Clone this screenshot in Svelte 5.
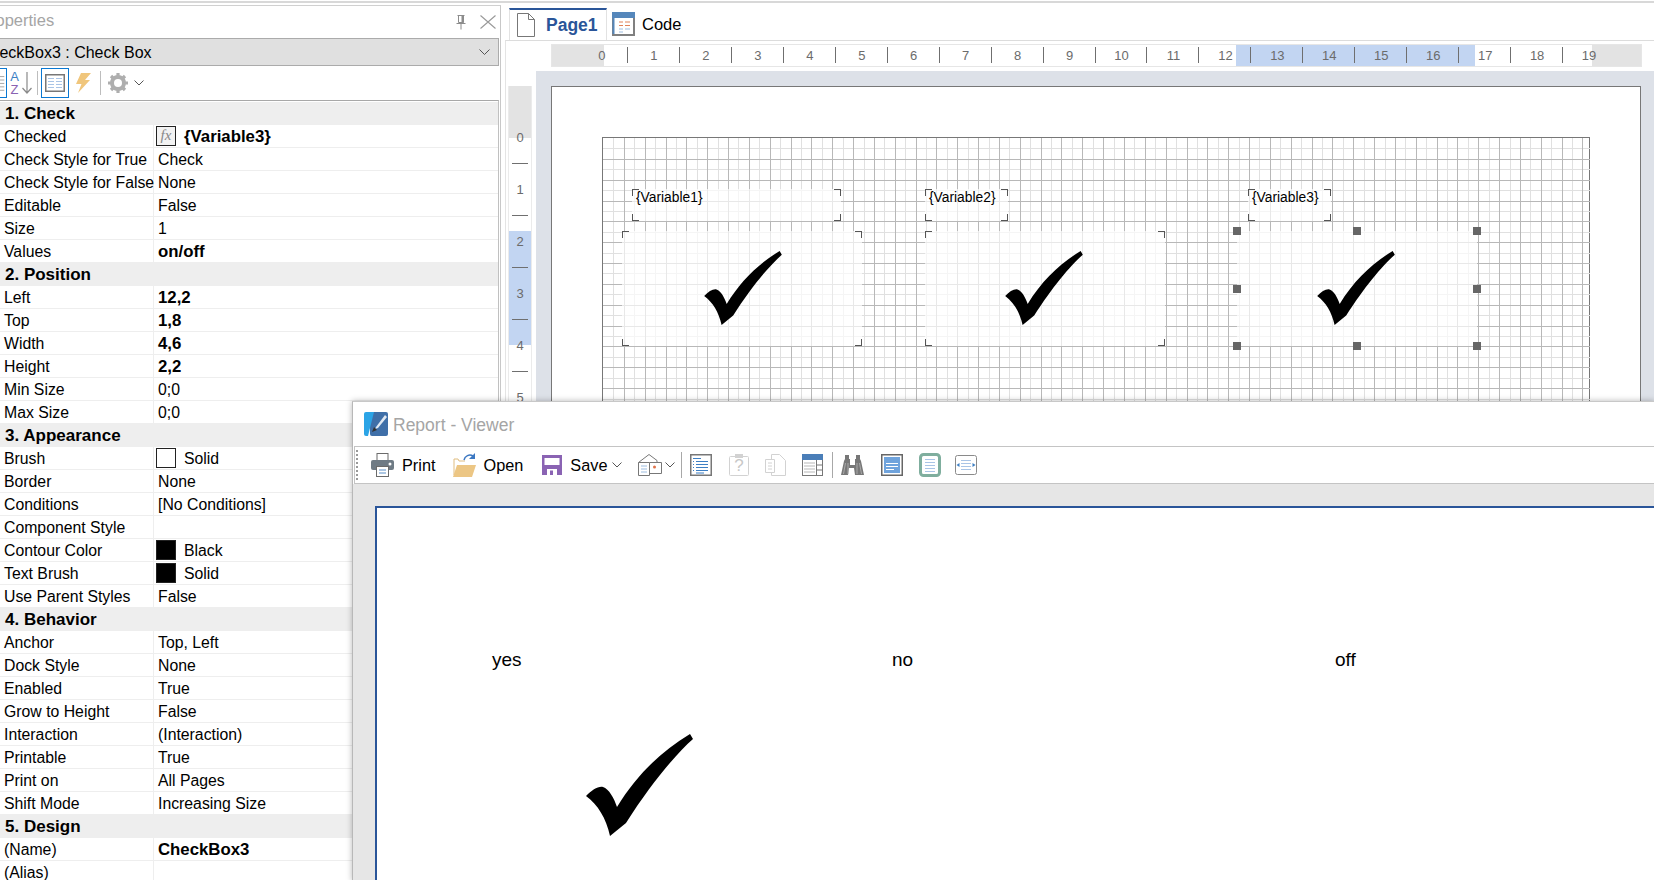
<script>
  const sections = [
    { title: '1. Check', rows: [
      { label: 'Checked', value: '{Variable3}', bold: true, fx: true },
      { label: 'Check Style for True', value: 'Check' },
      { label: 'Check Style for False', value: 'None' },
      { label: 'Editable', value: 'False' },
      { label: 'Size', value: '1' },
      { label: 'Values', value: 'on/off', bold: true }
    ]},
    { title: '2. Position', rows: [
      { label: 'Left', value: '12,2', bold: true },
      { label: 'Top', value: '1,8', bold: true },
      { label: 'Width', value: '4,6', bold: true },
      { label: 'Height', value: '2,2', bold: true },
      { label: 'Min Size', value: '0;0' },
      { label: 'Max Size', value: '0;0' }
    ]},
    { title: '3. Appearance', rows: [
      { label: 'Brush', value: 'Solid', swatch: 'white' },
      { label: 'Border', value: 'None' },
      { label: 'Conditions', value: '[No Conditions]' },
      { label: 'Component Style', value: '' },
      { label: 'Contour Color', value: 'Black', swatch: 'black' },
      { label: 'Text Brush', value: 'Solid', swatch: 'black' },
      { label: 'Use Parent Styles', value: 'False' }
    ]},
    { title: '4. Behavior', rows: [
      { label: 'Anchor', value: 'Top, Left' },
      { label: 'Dock Style', value: 'None' },
      { label: 'Enabled', value: 'True' },
      { label: 'Grow to Height', value: 'False' },
      { label: 'Interaction', value: '(Interaction)' },
      { label: 'Printable', value: 'True' },
      { label: 'Print on', value: 'All Pages' },
      { label: 'Shift Mode', value: 'Increasing Size' }
    ]},
    { title: '5. Design', rows: [
      { label: '(Name)', value: 'CheckBox3', bold: true },
      { label: '(Alias)', value: '' }
    ]}
  ];

  const rulerNums = Array.from({ length: 20 }, (_, i) => i);
  const vRulerNums = [0, 1, 2, 3, 4, 5];

  // report grid, 0.2 and 0.4 cm lines
  const step = 10.42;
  const gridW = 987;
  const gridH = 300;
  const xs = Array.from({ length: Math.ceil(gridW / step) - 1 }, (_, i) => i + 1);
  const ys = Array.from({ length: Math.ceil(gridH / step) - 1 }, (_, i) => i + 1);

  const textBoxes = [
    { text: '{Variable1}', left: 29, width: 209 },
    { text: '{Variable2}', left: 322, width: 83 },
    { text: '{Variable3}', left: 645, width: 83 }
  ];
  const checkBoxes = [
    { left: 19, width: 240, mark: 101 },
    { left: 322, width: 240, mark: 402 },
    { left: 634, width: 240, mark: 714, selected: true }
  ];
  const checkPath = 'M130 24 L133 29 C115 45 90 75 66 113 L50 126 C46 108 38 95 26 86 C32 80 38 76 43 77 C49 79 54 88 57 97 C76 66 100 42 130 24 Z';
</script>

<div class="app">
  <div class="top-rule"></div>
  <div class="main">
    <aside class="panel">
      <div class="panel-title">
        <span class="panel-name">Properties</span>
        <svg class="pin" width="14" height="15" viewBox="0 0 14 15"><path d="M3.500 .5h7M4.500 .5v7h5v-7M2.500 8.500h9M7 8.500v6" fill="none" stroke="#8c8c8c"/><rect x="7.500" y="1" width="2" height="7" fill="#8c8c8c"/></svg>
        <svg class="close" width="16" height="14" viewBox="0 0 16 14"><path d="M.5 .5l15 13M15.500 .5l-15 13" fill="none" stroke="#999" stroke-width="1.100"/></svg>
      </div>
      <div class="combo">
        <span class="combo-text">CheckBox3 : Check Box</span>
        <svg width="11" height="6" viewBox="0 0 11 6"><path d="M.5 .5l5 5 5-5" fill="none" stroke="#555"/></svg>
      </div>
      <div class="prop-tools">
        <span class="tool-on first">
          <svg width="7" height="22" viewBox="0 0 7 22"><path d="M0 3.500h5M0 7.500h5M0 11.500h5M0 15.500h5M0 19.500h5" stroke="#9a9a9a" fill="none"/></svg>
        </span>
        <span class="az">
          <span class="az-a">A</span>
          <span class="az-z">Z</span>
        </span>
        <svg class="az-arrow" width="10" height="22" viewBox="0 0 10 22"><path d="M5 0v21M.5 16l4.500 5 4.500-5" fill="none" stroke="#8a8a8a" stroke-width="1.200"/></svg>
        <span class="tool-sep"></span>
        <span class="tool-on">
          <svg width="20" height="18" viewBox="0 0 20 18"><rect x=".75" y=".75" width="18.500" height="16.500" fill="#fff" stroke="#777" stroke-width="1.500"/><path d="M3 4.500h6M11 4.500h6M3 7.500h6M11 7.500h6M3 10.500h6M11 10.500h6M3 13.500h6M11 13.500h6" stroke="#a9c4e6"/></svg>
        </span>
        <svg class="bolt" width="15" height="20" viewBox="0 0 15 20"><path d="M5 0h10L9 7h5L2 20l3.500-9H0z" fill="#f0c67c"/></svg>
        <span class="tool-sep second"></span>
        <svg class="gear" width="20" height="20" viewBox="0 0 20 20"><circle cx="10" cy="10" r="6" fill="none" stroke="#aeaeae" stroke-width="4"/><path d="M10 0v20M0 10h20M3 3l14 14M17 3L3 17" stroke="#aeaeae" stroke-width="3.200"/><circle cx="10" cy="10" r="4" fill="#fff"/></svg>
        <svg class="gear-chev" width="10" height="6" viewBox="0 0 10 6"><path d="M.5 .5l4.500 4.500 4.500-4.500" fill="none" stroke="#555"/></svg>
      </div>
      <div class="grid">
        {#each sections as section}
          <div class="cat">{section.title}</div>
          {#each section.rows as row}
            <div class="row">
              <div class="label">{row.label}</div>
              <div class="value" class:bold={row.bold}>
                {#if row.fx}
                  <span class="swatch fx">fx</span>
                {:else if row.swatch}
                  <span class="swatch {row.swatch}"></span>
                {/if}
                {row.value}
              </div>
            </div>
          {/each}
        {/each}
      </div>
    </aside>

    <section class="designer">
      <div class="tabs">
        <div class="tab active">
          <svg width="18" height="24" viewBox="0 0 18 24"><path d="M.5 .5h11l6 6v17H.5zM11.500 .5v6h6" fill="#fff" stroke="#777"/></svg>
          <span>Page1</span>
        </div>
        <div class="tab">
          <svg width="23" height="24" viewBox="0 0 23 24"><rect x="1" y="1" width="21" height="22" fill="#fff" stroke="#808080" stroke-width="2"/><rect width="23" height="6" fill="#5587bb"/><path d="M1.500 6v16" stroke="#5587bb" stroke-width="2"/><path d="M7 10h4M13 10h5M7 13.500h4M13 13.500h5" stroke="#e0825a"/><path d="M7 17h4M13 17h5M7 20h4" stroke="#9dbde0"/></svg>
          <span>Code</span>
        </div>
      </div>
      <div class="body">
        <div class="h-ruler">
          <div class="h-ruler-band"></div>
          {#each rulerNums as n}
            <div class="h-cell">
              <span class="h-num">{n}</span>
              {#if n < 19}<span class="h-tick"></span>{/if}
            </div>
          {/each}
        </div>
        <div class="work-row">
          <div class="v-ruler">
            <div class="v-grey"></div>
            <div class="v-band"></div>
            {#each vRulerNums as n}
              <div class="v-cell">
                <span class="v-num">{n}</span>
                <span class="v-tick"></span>
              </div>
            {/each}
          </div>
          <div class="workspace">
            <div class="page">
              <div class="canvas">
                <svg class="lines" width={gridW} height={gridH} shape-rendering="crispEdges">
                  {#each xs as i}
                    {#if i % 2}<line x1={Math.round(i * step) + 0.5} x2={Math.round(i * step) + 0.5} y1="0" y2={gridH} stroke="#e0e0e0"/>{/if}
                  {/each}
                  {#each ys as i}
                    {#if i % 2}<line y1={Math.round(i * step) + 0.5} y2={Math.round(i * step) + 0.5} x1="0" x2={gridW} stroke="#e0e0e0"/>{/if}
                  {/each}
                  {#each xs as i}
                    {#if !(i % 2)}<line x1={Math.round(i * step) + 0.5} x2={Math.round(i * step) + 0.5} y1="0" y2={gridH} stroke="#b8b8b8"/>{/if}
                  {/each}
                  {#each ys as i}
                    {#if !(i % 2)}<line y1={Math.round(i * step) + 0.5} y2={Math.round(i * step) + 0.5} x1="0" x2={gridW} stroke="#b8b8b8"/>{/if}
                  {/each}
                </svg>
                {#each textBoxes as box}
                  <div class="comp text-box" style="left:{box.left}px;width:{box.width}px">
                    <i class="tl"></i><i class="tr"></i><i class="bl"></i><i class="br"></i>
                    {box.text}
                  </div>
                {/each}
                {#each checkBoxes as box}
                  <div class="comp check-box" style="left:{box.left}px;width:{box.width}px">
                    {#if box.selected}
                      <b class="h h1"></b><b class="h h2"></b><b class="h h3"></b><b class="h h4"></b><b class="h h5"></b><b class="h h6"></b><b class="h h7"></b><b class="h h8"></b>
                    {:else}
                      <i class="tl"></i><i class="tr"></i><i class="bl"></i><i class="br"></i>
                    {/if}
                  </div>
                  <svg class="mark" style="left:{box.mark}px" width="78" height="74" viewBox="26 24 107 102"><path d={checkPath}/></svg>
                {/each}
              </div>
            </div>
          </div>
        </div>
      </div>
    </section>
  </div>

  <div class="viewer">
    <div class="viewer-title">
      <svg width="24" height="24" viewBox="0 0 24 24">
        <rect x="6" width="18" height="24" rx="2" fill="#3f6fa8"/>
        <path d="M2 0h8L4 24H2a2 2 0 0 1-2-2V2a2 2 0 0 1 2-2z" fill="#2ba4e6"/>
        <path d="M21 3L12 15l-1 2 3-1L23 5z" fill="#dfe8f2"/>
        <path d="M10 15l-2 5 5-2z" fill="#333"/>
      </svg>
      <span>Report - Viewer</span>
    </div>
    <div class="viewer-tools">
      <span class="grip"></span>
      <svg class="ic print" width="23" height="24" viewBox="0 0 23 24"><rect x="6" y=".5" width="11" height="7" fill="#fff" stroke="#6b6b6b"/><rect y="7" width="23" height="10" rx="2" fill="#6f7b85"/><circle cx="19" cy="11" r="1.500" fill="#fff"/><rect x="5.500" y="13.500" width="12" height="10" fill="#fff" stroke="#6b6b6b"/><path d="M8 17h7M8 20h7" stroke="#5b8fc7"/></svg>
      <span class="lbl print-l">Print</span>
      <svg class="ic open" width="23" height="24" viewBox="0 0 23 24"><path d="M1 22V6h4l1 2h6" fill="#fff" stroke="#e0bd80"/><path d="M0 24l4-12h19l-4 12z" fill="#ecc684"/><path d="M11 7a6 6 0 0 1 9-4" fill="none" stroke="#3c78c2" stroke-width="1.500"/><path d="M22 0v6h-6z" fill="#3c78c2"/></svg>
      <span class="lbl open-l">Open</span>
      <svg class="ic save" width="20" height="20" viewBox="0 0 20 20"><path d="M0 0h20v20H0z" fill="#8a63b3"/><rect x="2.500" y="3" width="15" height="7" fill="#fff"/><rect x="5" y="14" width="10" height="6" fill="#fff"/><rect x="8" y="15.500" width="3" height="4.500" fill="#8a63b3"/></svg>
      <span class="lbl save-l">Save</span>
      <svg class="chev save-c" width="10" height="6" viewBox="0 0 10 6"><path d="M.5 .5l4.500 4.500 4.500-4.500" fill="none" stroke="#555"/></svg>
      <svg class="ic house" width="24" height="22" viewBox="0 0 24 22"><path d="M.5 8.500L11 .5l8 6v2M.5 8.500v13h11v-13zM11.500 8.500h12v11h-12" fill="#fff" stroke="#777"/><path d="M3 12h6M3 15h6M3 18h6" stroke="#9dbde0"/><circle cx="16.500" cy="13" r="1.500" fill="#e0734a"/></svg>
      <svg class="chev house-c" width="10" height="6" viewBox="0 0 10 6"><path d="M.5 .5l4.500 4.500 4.500-4.500" fill="none" stroke="#555"/></svg>
      <span class="vsep s1"></span>
      <svg class="ic outline" width="22" height="22" viewBox="0 0 22 22"><rect x=".75" y=".75" width="20.500" height="20.500" fill="#fff" stroke="#777" stroke-width="1.500"/><path d="M3 4.500h8M6 7.500h12M6 10.500h12M6 13.500h12M6 16.500h12M6 19h8" stroke="#3d7fc4" stroke-width="1.200"/><path d="M3.500 7v1M3.500 10v1M3.500 13v1M3.500 16v1" stroke="#3d7fc4"/></svg>
      <svg class="ic clip" width="20" height="22" viewBox="0 0 20 22"><rect x=".5" y="2.500" width="19" height="19" rx="1" fill="#fff" stroke="#d2d2d2"/><rect x="6" y="0" width="8" height="4" fill="#d2d2d2"/><text x="10" y="17" text-anchor="middle" class="qm">?</text></svg>
      <svg class="ic copy" width="21" height="22" viewBox="0 0 21 22"><path d="M6.500 .5h8l6 6v15h-14z" fill="#fff" stroke="#d2d2d2"/><path d="M.5 5.500h9v13h-9z" fill="#fff" stroke="#d2d2d2"/><path d="M3 9h4M3 12h4M3 15h4" stroke="#d2d2d2"/></svg>
      <svg class="ic table" width="21" height="22" viewBox="0 0 21 22"><rect x=".5" y=".5" width="20" height="21" fill="#fff" stroke="#777"/><rect width="21" height="6" fill="#4a7eb8"/><path d="M2 9h11M2 12h11M2 15h11M2 18h11" stroke="#b8b8b8" stroke-width="1.200"/><path d="M14.500 6v15M14.500 11H21M14.500 16H21" stroke="#777"/></svg>
      <span class="vsep s2"></span>
      <svg class="ic bino" width="23" height="22" viewBox="0 0 23 22"><path d="M4 1h4v4h1v6h5V5h1V1h4v4l1 2 3 14h-9l-1-7h-5l-1 7H0L3 7l1-2z" fill="#777"/><path d="M2.500 20l2-11M7 20V9M16 20V9M20.500 20l-2-11" stroke="#b5b5b5" stroke-width=".8"/></svg>
      <svg class="ic pg-blue" width="22" height="22" viewBox="0 0 22 22"><rect x=".75" y=".75" width="20.500" height="20.500" fill="#fff" stroke="#666" stroke-width="1.500"/><rect x="3" y="3" width="16" height="16" fill="#6fa3dc"/><path d="M5 9.500h12M5 12.500h12M5 15.500h8" stroke="#fff"/></svg>
      <svg class="ic pg-green" width="22" height="24" viewBox="0 0 22 24"><rect x="1.500" y="1.500" width="19" height="21" rx="3" fill="#fff" stroke="#7fae9e" stroke-width="3"/><path d="M6 6.500h10M6 9.500h10M6 12.500h10M6 15.500h10M6 18.500h10" stroke="#a9c4e6"/></svg>
      <svg class="ic pg-wide" width="22" height="20" viewBox="0 0 22 20"><rect x=".5" y=".5" width="21" height="19" rx="2" fill="#fff" stroke="#8a8a8a"/><path d="M6 5.500h10M6 8.500h10M6 11.500h10M6 14.500h10" stroke="#a9c4e6"/><path d="M1.500 10l3-2v4zM20.500 10l-3-2v4z" fill="#3d7fc4"/></svg>
    </div>
    <div class="viewer-body">
      <div class="paper">
        <span class="report-text t1">yes</span>
        <span class="report-text t2">no</span>
        <span class="report-text t3">off</span>
        <svg class="big-mark" width="107" height="102" viewBox="26 24 107 102"><path d={checkPath}/></svg>
      </div>
    </div>
  </div>
</div>

<style>
  :global(body) {
    background: #fff;
    font-family: "Liberation Sans", Arial, sans-serif;
  }
  .app {
    position: relative;
    width: 1654px;
    height: 880px;
    overflow: hidden;
    background: #fff;
    color: #000;
    font-size: 15.800px;
  }
  .top-rule {
    height: 2px;
    margin-top: 1px;
    background: #d8d8d8;
  }
  .main {
    display: flex;
    height: 877px;
  }

  /* properties panel */
  .panel {
    width: 501px;
    flex: none;
    box-sizing: border-box;
    margin-top: 2px;
    border-top: 1px solid #d0d0d0;
    border-right: 1px solid #c8c8c8;
    overflow: hidden;
  }
  .panel-title {
    display: flex;
    align-items: center;
    height: 32px;
  }
  .panel-name {
    margin: -4px 0 0 -21px;
    color: #a5a5a5;
    font-size: 16.500px;
    flex: 1;
  }
  .pin {
    margin-right: 12px;
  }
  .close {
    margin-right: 4px;
  }
  .combo {
    display: flex;
    align-items: center;
    justify-content: space-between;
    box-sizing: border-box;
    height: 28px;
    padding-right: 8px;
    background: #e0e0e0;
    border: 1px solid #ababab;
    border-left: 0;
    margin-right: 1px;
  }
  .combo-text {
    margin: 2px 0 0 -21px;
    font-size: 16px;
  }
  .prop-tools {
    display: flex;
    align-items: center;
    height: 34px;
    box-sizing: border-box;
  }
  .tool-on {
    display: flex;
    align-items: center;
    justify-content: center;
    box-sizing: border-box;
    width: 28px;
    height: 30px;
    border: 1px solid #0a78d2;
  }
  .tool-on.first {
    width: 7px;
    border-left: 0;
    margin-right: 3px;
    justify-content: flex-start;
  }
  .az {
    display: flex;
    flex-direction: column;
    width: 9px;
    font-size: 13px;
    line-height: 13px;
    align-items: center;
  }
  .az-a {
    color: #3d7fc4;
  }
  .az-z {
    color: #8a63b3;
  }
  .az-arrow {
    margin-left: 3px;
  }
  .tool-sep {
    width: 1px;
    height: 24px;
    background: #bdbdbd;
    margin: 0 3px 0 5px;
  }
  .tool-sep.second {
    margin: 0 7px 0 9px;
  }
  .bolt {
    margin-left: 7px;
  }
  .gear-chev {
    margin-left: 6px;
  }
  .grid {
    border-top: 1px solid #a8a8a8;
    border-right: 1px solid #c0c0c0;
    padding-top: 1px;
    margin-right: 1px;
  }
  .cat {
    height: 23px;
    line-height: 24px;
    padding-left: 5px;
    background: #eeeeee;
    font-weight: 700;
    font-size: 17px;
  }
  .row {
    display: flex;
    height: 23px;
    box-sizing: border-box;
    line-height: 24px;
    border-bottom: 1px solid #eeeeee;
    white-space: nowrap;
  }
  .label {
    flex: none;
    width: 154px;
    box-sizing: border-box;
    padding-left: 4px;
    border-right: 1px solid #eeeeee;
  }
  .value {
    display: flex;
    align-items: center;
    gap: 8px;
    height: 24px;
    padding-left: 4px;
  }
  .value.bold {
    font-weight: 700;
    font-size: 16.800px;
  }
  .swatch {
    box-sizing: border-box;
    flex: none;
    width: 20px;
    height: 20px;
    margin: -2px 0 0 -2px;
    border: 1px solid #222;
  }
  .swatch.black {
    background: #000;
  }
  .swatch.white {
    background: #fff;
  }
  .swatch.fx {
    font-family: "Liberation Serif", serif;
    font-style: italic;
    font-weight: 400;
    font-size: 15px;
    line-height: 17px;
    text-align: center;
    color: #888;
    background: #f2f2f2;
  }

  /* designer */
  .designer {
    flex: 1;
    min-width: 0;
  }
  .tabs {
    display: flex;
    align-items: stretch;
    padding: 5px 0 0 8px;
    height: 32px;
  }
  .tab {
    display: flex;
    align-items: center;
    gap: 7px;
    padding: 0 6px 0 5px;
    font-size: 16.500px;
  }
  .tab.active {
    box-sizing: border-box;
    width: 98px;
    gap: 11px;
    padding-left: 7px;
    border-top: 2px solid #2a5599;
    border-left: 1px solid #e2e2e2;
    border-right: 1px solid #e2e2e2;
    color: #2a5599;
    font-weight: 700;
    font-size: 17.500px;
  }
  .body {
    margin-left: 4px;
    border-top: 1px solid #dcdcdc;
    border-left: 1px solid #e4e4e4;
    height: 840px;
  }
  .h-ruler {
    position: relative;
    display: flex;
    box-sizing: border-box;
    width: 1091px;
    height: 23px;
    margin: 3px 0 0 45px;
    padding-left: 24px;
    border: 1px solid #e6e6e6;
    background: linear-gradient(to right, #e3e3e3 52px, #fff 52px, #fff 1040px, #e3e3e3 1040px);
  }
  .h-ruler-band {
    position: absolute;
    left: 684px;
    width: 239px;
    top: 0;
    bottom: 0;
    background: #c2d5f2;
  }
  .h-cell {
    position: relative;
    flex: none;
    width: 51.960px;
    text-align: center;
    color: #6b6b6b;
    font-size: 13px;
    line-height: 21px;
  }
  .h-tick {
    position: absolute;
    right: 0;
    top: 2px;
    width: 1px;
    height: 16px;
    background: #6f6f6f;
  }
  .h-num {
    position: relative;
  }
  .work-row {
    display: flex;
    margin-top: 4px;
  }
  .v-ruler {
    position: relative;
    box-sizing: border-box;
    flex: none;
    width: 24px;
    margin: 15px 0 0 2px;
    padding-top: 26px;
    border: 1px solid #ebebeb;
    border-width: 0 1px;
    background: #fff;
    text-align: center;
  }
  .v-grey {
    position: absolute;
    left: 0;
    right: 0;
    top: 0;
    height: 52px;
    background: #e3e3e3;
  }
  .v-band {
    position: absolute;
    left: 0;
    right: 0;
    top: 145px;
    height: 114px;
    background: #c2d5f2;
  }
  .v-cell {
    position: relative;
    height: 52px;
    color: #6b6b6b;
    font-size: 13px;
    line-height: 52px;
  }
  .v-tick {
    position: absolute;
    left: 3px;
    right: 3px;
    bottom: 0;
    height: 1px;
    background: #6f6f6f;
  }
  .workspace {
    flex: 1;
    margin-left: 4px;
    height: 800px;
    padding: 15px 13px 0 15px;
    background: #dde1e8;
  }
  .page {
    box-sizing: border-box;
    height: 780px;
    padding: 50px 50px 0 50px;
    border: 1px solid #777;
    background: #fff;
  }
  .canvas {
    position: relative;
    box-sizing: border-box;
    width: 988px;
    height: 400px;
    border: 1px solid #777;
  }
  .lines {
    display: block;
  }
  .comp {
    position: absolute;
    box-sizing: border-box;
    background: rgba(255, 255, 255, 0.68);
  }
  .comp i {
    position: absolute;
    width: 6px;
    height: 6px;
    border: 0 solid #555;
  }
  .tl { left: 0; top: 0; border-width: 1px 0 0 1px !important; }
  .tr { right: 0; top: 0; border-width: 1px 1px 0 0 !important; }
  .bl { left: 0; bottom: 0; border-width: 0 0 1px 1px !important; }
  .br { right: 0; bottom: 0; border-width: 0 1px 1px 0 !important; }
  .text-box {
    top: 51px;
    height: 32px;
    padding: 0 4px;
    font-size: 13.800px;
    line-height: 18px;
  }
  .check-box {
    top: 93px;
    height: 115px;
  }
  .h {
    position: absolute;
    width: 8px;
    height: 8px;
    margin: -4px 0 0 -4px;
    background: #666;
  }
  .h1 { left: 0; top: 0; }
  .h2 { left: 50%; top: 0; }
  .h3 { left: 100%; top: 0; }
  .h4 { left: 0; top: 50%; }
  .h5 { left: 100%; top: 50%; }
  .h6 { left: 0; top: 100%; }
  .h7 { left: 50%; top: 100%; }
  .h8 { left: 100%; top: 100%; }
  .mark {
    position: absolute;
    top: 113px;
  }

  /* viewer window */
  .viewer {
    position: absolute;
    left: 352px;
    top: 401px;
    width: 1302px;
    height: 479px;
    background: #fff;
    border-left: 1px solid #b8b8b8;
    border-top: 1px solid #c8c8c8;
    box-shadow: 0 0 6px rgba(0, 0, 0, 0.28);
  }
  .viewer-title {
    display: flex;
    align-items: center;
    gap: 5px;
    height: 44px;
    padding-left: 11px;
    color: #a5a5a5;
    font-size: 17.500px;
  }
  .viewer-title span {
    margin-top: 2px;
  }
  .viewer-tools {
    position: relative;
    display: flex;
    align-items: center;
    box-sizing: border-box;
    height: 38px;
    margin-left: 1px;
    border: 1px solid #c4c4c4;
    border-right: 0;
  }
  .grip {
    width: 2px;
    height: 30px;
    margin-left: 1px;
    background: repeating-linear-gradient(to bottom, #999 0 2px, transparent 2px 4px);
  }
  .ic,
  .chev,
  .vsep {
    flex: none;
  }
  .lbl {
    font-size: 16.300px;
  }
  .print { margin-left: 13px; }
  .print-l { margin-left: 8px; }
  .open { margin-left: 18px; }
  .open-l { margin-left: 7px; }
  .save { margin-left: 19px; }
  .save-l { margin-left: 8px; }
  .save-c { margin-left: 5px; }
  .house { margin-left: 16px; }
  .house-c { margin-left: 3px; }
  .vsep {
    width: 1px;
    height: 26px;
    background: #a8a8a8;
  }
  .s1 { margin-left: 6px; }
  .outline { margin-left: 8px; }
  .clip { margin-left: 17px; }
  .copy { margin-left: 16px; }
  .table { margin-left: 16px; }
  .s2 { margin-left: 9px; }
  .bino { margin-left: 8px; }
  .pg-blue { margin-left: 17px; }
  .pg-green { margin-left: 16px; }
  .pg-wide { margin-left: 14px; }
  .qm {
    font-size: 17px;
    fill: #c8c8c8;
    font-family: "Liberation Sans", sans-serif;
  }
  .viewer-body {
    height: 397px;
    padding: 22px 0 0 22px;
    background: #e6e6e6;
  }
  .paper {
    position: relative;
    height: 500px;
    border: 2px solid #2a5599;
    border-right: 0;
    background: #fff;
  }
  .report-text {
    position: absolute;
    top: 141px;
    font-family: "Liberation Sans", sans-serif;
    font-size: 19px;
    line-height: 22px;
  }
  .t1 { left: 115px; }
  .t2 { left: 515px; }
  .t3 { left: 958px; }
  .big-mark {
    position: absolute;
    left: 209px;
    top: 226px;
  }
</style>
